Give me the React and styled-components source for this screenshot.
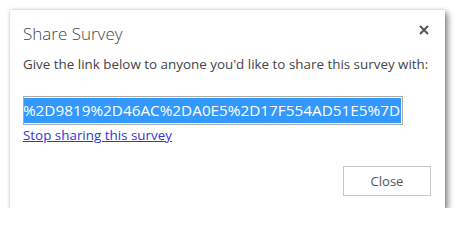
import React from "react";
import styled, { createGlobalStyle } from "styled-components";

const GlobalStyle = createGlobalStyle`
  html, body {
    margin: 0;
    padding: 0;
    background: #fff;
  }
  body {
    font-family: "Open Sans", "Liberation Sans", sans-serif;
    color: #444;
  }
`;

const Page = styled.div`
  padding: 10px 0 0 10px;
`;

const Dialog = styled.div`
  width: 435px;
  height: 198px;
  box-sizing: border-box;
  background: #fff;
  padding: 12px 14px 12px 13px;
  display: flex;
  flex-direction: column;
  box-shadow: 0 0 3px rgba(0, 0, 0, 0.18), 3px 3px 6px rgba(0, 0, 0, 0.45);
`;

const Header = styled.div`
  display: flex;
  justify-content: space-between;
  align-items: center;
  height: 24px;
`;

const Title = styled.h2`
  margin: 0;
  font-size: 17px;
  font-weight: 300;
  line-height: 24px;
  color: #444;
`;

const CloseX = styled.button`
  border: 0;
  background: none;
  padding: 0;
  margin-top: -8px;
  width: 14px;
  height: 14px;
  display: flex;
  align-items: center;
  justify-content: center;
  cursor: pointer;
`;

const Description = styled.p`
  margin: 9px 0 0;
  font-size: 13.4px;
  line-height: 18px;
  color: #444;
  white-space: nowrap;
`;

const LinkBox = styled.div`
  margin-top: 23px;
  width: 380px;
  height: 29px;
  box-sizing: border-box;
  border: 1px solid #ababab;
  padding: 1px;
  display: flex;
  justify-content: flex-end;
  overflow: hidden;
  white-space: nowrap;
`;

const Selected = styled.span`
  background: #3399ff;
  color: #fff;
  font-size: 15.3px;
  line-height: 25px;
  padding-right: 1px;
`;

const StopLink = styled.a`
  margin-top: 2px;
  font-size: 13.4px;
  line-height: 17px;
  color: #3535d8;
  text-decoration: underline;
  align-self: flex-start;
  cursor: pointer;
`;

const Footer = styled.div`
  margin-top: auto;
  display: flex;
  justify-content: flex-end;
`;

const Button = styled.button`
  width: 88px;
  height: 30px;
  background: #fff;
  border: 1px solid #c6c6c6;
  font-family: inherit;
  font-size: 13px;
  color: #555;
  cursor: pointer;
`;

export default function App() {
  return (
    <Page>
      <GlobalStyle />
      <Dialog>
        <Header>
          <Title>Share Survey</Title>
          <CloseX aria-label="Close">
            <svg width="10" height="10" viewBox="0 0 10 10">
              <path d="M1 1 L9 9 M9 1 L1 9" stroke="#555" strokeWidth="2" />
            </svg>
          </CloseX>
        </Header>
        <Description>
          Give the link below to anyone you'd like to share this survey with:
        </Description>
        <LinkBox>
          <Selected>
            {"ID=%7B3F0C%2D9819%2D46AC%2DA0E5%2D17F554AD51E5%7D"}
          </Selected>
        </LinkBox>
        <StopLink>Stop sharing this survey</StopLink>
        <Footer>
          <Button>Close</Button>
        </Footer>
      </Dialog>
    </Page>
  );
}
